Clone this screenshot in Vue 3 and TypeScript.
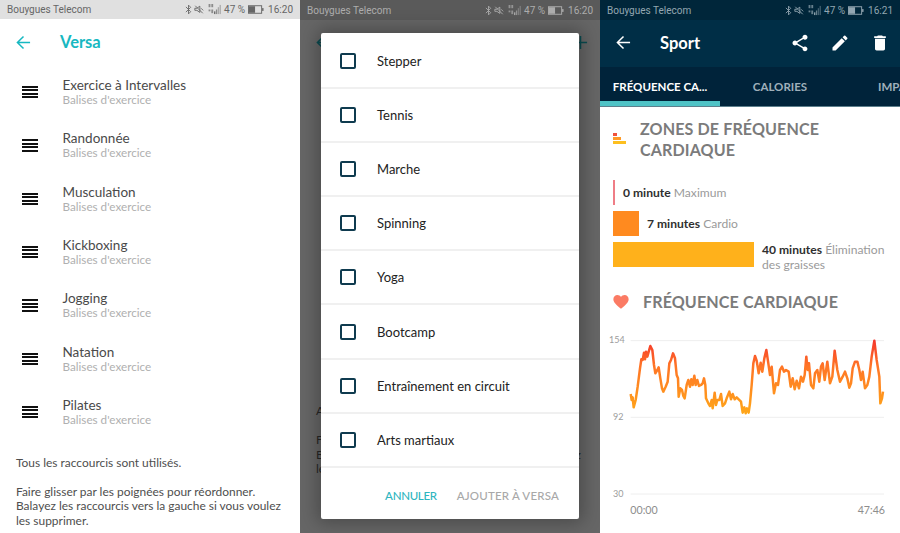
<script setup lang="ts">
const sports = ['Exercice à Intervalles', 'Randonnée', 'Musculation', 'Kickboxing', 'Jogging', 'Natation', 'Pilates']
const options = ['Stepper', 'Tennis', 'Marche', 'Spinning', 'Yoga', 'Bootcamp', 'Entraînement en circuit', 'Arts martiaux']
const trace = '92,222 95,240 98,232 101,262 107,240 113,200 120,145 124,118 128,120 132,98 135,118 138,95 142,110 147,92 151,78 157,90 162,135 166,160 172,150 176,142 181,175 186,205 190,215 197,200 203,185 208,130 213,120 219,100 225,115 230,165 234,175 236,230 241,205 246,210 250,228 254,235 260,195 265,180 270,200 274,178 278,195 283,167 287,195 292,180 297,198 303,195 308,190 312,175 316,195 318,235 325,250 330,258 335,240 338,265 344,218 348,255 352,240 358,240 363,222 368,258 375,250 380,235 388,215 393,238 398,222 404,238 410,232 416,238 423,245 428,278 433,262 437,280 441,265 446,278 450,250 455,195 460,130 465,108 470,122 476,160 482,128 487,155 493,115 499,90 505,130 510,165 515,140 522,220 528,190 534,195 540,150 546,140 552,155 558,150 566,155 572,200 578,175 584,208 590,182 597,205 603,170 609,185 614,165 619,110 623,150 627,130 633,195 640,205 645,160 652,150 658,185 663,140 668,130 674,180 682,125 690,190 697,170 704,92 712,150 720,185 728,170 735,155 742,175 748,203 753,190 758,145 765,125 772,125 778,150 783,180 788,155 795,205 802,195 808,170 815,110 823,62 830,120 838,170 841,250 846,235 849,215'
const gridLines: { y: number; label: string; x: number }[] = [
  { y: 62, label: '154', x: 27 },
  { y: 292, label: '92', x: 39 },
  { y: 522, label: '30', x: 39 },
]
</script>

<template>
  <div class="shots">
    <svg class="defs" width="0" height="0" aria-hidden="true">
      <symbol id="st-bt" viewBox="0 0 8 12">
        <path d="M1 3l5.500 5.500L4 11V1l2.500 2.500L1 9" fill="none" stroke="currentColor" stroke-width="1" />
      </symbol>
      <symbol id="st-mute" viewBox="0 0 12 12">
        <path d="M1 4.500h2.500L7 2v7.500L3.500 7H1zM1.500 1.500l9 9M8.500 4.500l2.500 2.500" fill="none" stroke="currentColor" stroke-width="1.100" />
      </symbol>
      <symbol id="st-sig" viewBox="0 0 14 12">
        <rect x="0" y="0" width="2" height="3.500" fill="currentColor" opacity=".7" />
        <rect x="3" y="0" width="2" height="3.500" fill="currentColor" opacity=".7" />
        <rect x="0" y="6" width="2" height="2" fill="currentColor" opacity=".7" />
        <rect x="3" y="6" width="2" height="4" fill="currentColor" opacity=".7" />
        <rect x="6" y="8" width="1.400" height="3" fill="currentColor" />
        <rect x="8" y="6" width="1.400" height="5" fill="currentColor" opacity=".7" />
        <rect x="10" y="3.500" width="1.400" height="7.500" fill="currentColor" opacity=".45" />
        <rect x="12" y="1" width="1.400" height="10" fill="currentColor" opacity=".45" />
      </symbol>
      <symbol id="st-bat" viewBox="0 0 17 9">
        <rect x=".5" y=".5" width="14" height="8" fill="none" stroke="currentColor" />
        <rect x="1" y="1" width="6.500" height="7" fill="currentColor" />
        <rect x="15" y="3" width="1.500" height="3" fill="currentColor" />
      </symbol>
    </svg>

    <section class="panel light">
      <div class="status">
        <span>Bouygues Telecom</span>
        <div class="status-right">
          <svg class="i-bt"><use href="#st-bt" /></svg>
          <svg class="i-mute"><use href="#st-mute" /></svg>
          <svg class="i-sig"><use href="#st-sig" /></svg>
          <span>47 %</span>
          <svg class="i-bat"><use href="#st-bat" /></svg>
          <span>16:20</span>
        </div>
      </div>
      <header class="bar">
        <svg class="back" viewBox="0 0 16 16"><path d="M15 8H2M8 1.500L1.500 8 8 14.500" fill="none" stroke="currentColor" stroke-width="1.600" /></svg>
        <h1>Versa</h1>
      </header>
      <ul class="sports">
        <li v-for="s in sports" :key="s">
          <span class="handle"><i></i><i></i><i></i><i></i></span>
          <div>
            <div class="sport-name">{{ s }}</div>
            <div class="sport-sub">Balises d'exercice</div>
          </div>
        </li>
      </ul>
      <div class="note">
        <p>Tous les raccourcis sont utilisés.</p>
        <p>Faire glisser par les poignées pour réordonner. Balayez les raccourcis vers la gauche si vous voulez les supprimer.</p>
      </div>
    </section>

    <section class="panel dim">
      <div class="status">
        <span>Bouygues Telecom</span>
        <div class="status-right">
          <svg class="i-bt"><use href="#st-bt" /></svg>
          <svg class="i-mute"><use href="#st-mute" /></svg>
          <svg class="i-sig"><use href="#st-sig" /></svg>
          <span>47 %</span>
          <svg class="i-bat"><use href="#st-bat" /></svg>
          <span>16:20</span>
        </div>
      </div>
      <div class="dim-peek">
        <p>Ajouter</p>
        <p>Faire<br />Balayez les raccourcis vers la gauche si vous voulez<br />les</p>
      </div>
      <svg class="peek-arrow" viewBox="0 0 16 16"><path d="M15 8H2M8 1.500L1.500 8 8 14.500" fill="none" stroke="currentColor" stroke-width="1.600" /></svg>
      <svg class="peek-plus" viewBox="0 0 16 16"><path d="M1 8h14M8 1v14" fill="none" stroke="currentColor" stroke-width="1.600" /></svg>
      <div class="modal">
        <div v-for="o in options" :key="o" class="opt">
          <span class="check"></span>
          <span>{{ o }}</span>
        </div>
        <div class="actions">
          <span class="cancel">ANNULER</span>
          <span class="add">AJOUTER À VERSA</span>
        </div>
      </div>
    </section>

    <section class="panel sport">
      <div class="status">
        <span>Bouygues Telecom</span>
        <div class="status-right">
          <svg class="i-bt"><use href="#st-bt" /></svg>
          <svg class="i-mute"><use href="#st-mute" /></svg>
          <svg class="i-sig"><use href="#st-sig" /></svg>
          <span>47 %</span>
          <svg class="i-bat"><use href="#st-bat" /></svg>
          <span>16:21</span>
        </div>
      </div>
      <header class="bar sport-bar">
        <svg class="back" viewBox="0 0 16 16"><path d="M15 8H2M8 1.500L1.500 8 8 14.500" fill="none" stroke="currentColor" stroke-width="1.600" /></svg>
        <h1>Sport</h1>
        <div class="tools">
          <svg viewBox="0 0 24 24"><path fill="currentColor" d="M18 16.080c-.76 0-1.440.3-1.960.77L8.910 12.700c.05-.23.090-.46.090-.7s-.04-.47-.09-.7l7.050-4.110c.54.5 1.250.81 2.040.81 1.660 0 3-1.340 3-3s-1.340-3-3-3-3 1.340-3 3c0 .24.040.47.090.7L8.040 9.810C7.500 9.310 6.790 9 6 9c-1.660 0-3 1.340-3 3s1.340 3 3 3c.79 0 1.500-.31 2.040-.81l7.120 4.160c-.05.21-.08.43-.08.65 0 1.610 1.310 2.920 2.920 2.920s2.920-1.310 2.920-2.920-1.310-2.920-2.920-2.920z" /></svg>
          <svg viewBox="0 0 24 24"><path fill="currentColor" d="M3 17.250V21h3.750L17.810 9.940l-3.750-3.750L3 17.250zM20.710 7.040a1 1 0 0 0 0-1.410l-2.340-2.340a1 1 0 0 0-1.410 0l-1.830 1.830 3.750 3.750 1.830-1.830z" /></svg>
          <svg viewBox="0 0 24 24"><path fill="currentColor" d="M6 19c0 1.100.9 2 2 2h8c1.100 0 2-.9 2-2V7H6v12zM19 4h-3.500l-1-1h-5l-1 1H5v2h14V4z" /></svg>
        </div>
      </header>
      <nav class="tabs">
        <span class="tab active">FRÉQUENCE CA...</span>
        <span class="tab">CALORIES</span>
        <span class="tab cut">IMPACT</span>
      </nav>
      <div class="sport-body">
        <div class="section-head zones-head">
          <svg class="zones-ico" viewBox="0 0 13 11">
            <rect x="0" y="0" width="4" height="3" fill="#f0523c" />
            <rect x="0" y="4" width="8" height="3" fill="#ff9a26" />
            <rect x="0" y="8" width="13" height="3" fill="#fdbf1f" />
          </svg>
          <h2>ZONES DE FRÉQUENCE CARDIAQUE</h2>
        </div>
        <div class="zone zone-max">
          <span class="z-bar z0"></span>
          <span class="z-text"><b>0 minute</b> Maximum</span>
        </div>
        <div class="zone zone-cardio">
          <span class="z-bar z1"></span>
          <span class="z-text"><b>7 minutes</b> Cardio</span>
        </div>
        <div class="zone zone-fat">
          <span class="z-bar z2"></span>
          <span class="z-text"><b>40 minutes</b> Élimination des graisses</span>
        </div>
        <div class="section-head heart-head">
          <svg class="heart" viewBox="0 0 24 22"><path fill="#fb7b64" d="M12 21.500C5 15.500 0 11.500 0 6.500 0 2.800 2.800 0 6.400 0 8.600 0 10.800 1.100 12 3c1.200-1.900 3.400-3 5.600-3C21.200 0 24 2.800 24 6.500c0 5-5 9-12 15z" /></svg>
          <h2>FRÉQUENCE CARDIAQUE</h2>
        </div>
        <div class="chart">
          <svg viewBox="0 0 900 639" width="300" height="213">
            <defs>
              <linearGradient id="hr" gradientUnits="userSpaceOnUse" x1="0" y1="60" x2="0" y2="285">
                <stop offset="0" stop-color="#f4352b" />
                <stop offset=".35" stop-color="#ff7526" />
                <stop offset="1" stop-color="#ffa818" />
              </linearGradient>
            </defs>
            <g v-for="g in gridLines" :key="g.label">
              <line x1="92" x2="852" :y1="g.y" :y2="g.y" stroke="#eeeeee" stroke-width="3" />
              <text :x="g.x" :y="g.y + 8" class="axis">{{ g.label }}</text>
            </g>
            <polyline :points="trace" fill="none" stroke="url(#hr)" stroke-width="7.500" stroke-linejoin="round" />
            <text x="91" y="582" class="time">00:00</text>
            <text x="773" y="582" class="time">47:46</text>
          </svg>
        </div>
      </div>
    </section>
  </div>
</template>

<style>
html, body { margin: 0; background: #fff; }
</style>

<style scoped>
.shots {
  display: flex;
  width: 900px;
  height: 533px;
  overflow: hidden;
  font-family: Lato, "Open Sans", sans-serif;
}
.defs { position: absolute; }
.panel {
  position: relative;
  width: 300px;
  height: 533px;
  overflow: hidden;
  background: #fff;
  flex: none;
}
.status {
  display: flex;
  justify-content: space-between;
  align-items: center;
  height: 19px;
  padding: 0 7px;
  font-family: Roboto, sans-serif;
  font-size: 10px;
  color: #666;
  background: #e0e0e0;
}
.dim .status, .sport .status { height: 20px; }
.status-right { display: flex; align-items: center; gap: 2px; }
.i-bt { width: 7px; height: 11px; }
.i-mute { width: 10px; height: 11px; margin-right: 2px; }
.i-sig { width: 14px; height: 11px; }
.i-bat { width: 16px; height: 9px; margin: 0 2px 0 1px; }

.bar {
  display: flex;
  align-items: center;
  height: 47px;
  padding-left: 16px;
  padding-bottom: 1px;
  box-sizing: border-box;
  color: #17b8c1;
}
.back { width: 15px; height: 15px; flex: none; }
.bar h1 {
  margin: 0 0 0 29px;
  font-size: 16.500px;
  font-weight: 700;
  line-height: 20px;
}

.sports { list-style: none; margin: 0; padding: 0; }
.sports li {
  display: flex;
  align-items: center;
  height: 53.330px;
  padding-left: 22px;
  box-sizing: border-box;
}
.handle {
  display: flex;
  flex-direction: column;
  gap: 1.400px;
  width: 16px;
  margin-right: 24.500px;
  margin-top: -1px;
}
.handle i { display: block; height: 2px; background: #111; }
.sport-name { font-size: 13.500px; line-height: 15px; color: #4a4a4a; }
.sport-sub { font-size: 11.700px; line-height: 14px; margin-top: -1px; padding-bottom: 1px; color: #b0b0b0; }
.note {
  margin-top: 16.500px;
  padding: 0 16px;
  font-size: 11.950px;
  line-height: 14.600px;
  color: #4e4e4e;
}
.note p { margin: 0 0 14.500px; }

.dim { background: #666; }
.dim .status { background: #5a5a5a; color: #adadad; }
.dim-peek {
  position: absolute;
  top: 404px;
  left: 16px;
  width: 270px;
  font-size: 11.950px;
  line-height: 14.600px;
  color: #262626;
}
.dim-peek p { margin: 0 0 14.500px; }
.peek-arrow, .peek-plus {
  position: absolute;
  top: 35px;
  width: 15px;
  height: 15px;
  color: #0a4b50;
}
.peek-arrow { left: 16px; }
.peek-plus { left: 273px; }
.modal {
  position: absolute;
  left: 21px;
  top: 33px;
  width: 258px;
  height: 486px;
  padding-top: 2px;
  box-sizing: border-box;
  background: #fff;
  border-radius: 2px;
  box-shadow: 0 0 18px 4px rgba(0, 0, 0, .28);
  display: flex;
  flex-direction: column;
  font-size: 13px;
  color: #222;
}
.opt {
  display: flex;
  align-items: center;
  height: 54.100px;
  flex: none;
  padding-left: 19px;
  box-sizing: border-box;
  border-bottom: 2px solid #f0f0f0;
}
.check {
  width: 12px;
  height: 12px;
  border: 2px solid #0f3b4f;
  border-radius: 2px;
  margin-right: 21px;
  flex: none;
}
.actions {
  flex: 1;
  display: flex;
  justify-content: flex-end;
  align-items: center;
  gap: 20px;
  padding: 5px 20px 0 0;
  font-size: 11.500px;
  font-weight: 500;
  letter-spacing: .2px;
}
.cancel { color: #2fb6bf; letter-spacing: -.3px; }
.add { color: #a8a8a8; }

.sport .status { background: #00263a; color: #93a6b1; }
.sport-bar { background: #002e46; color: #fff; padding-bottom: 2px; }
.tools {
  margin-left: auto;
  display: flex;
  gap: 20px;
  padding-right: 10px;
}
.tools svg { width: 20px; height: 20px; }
.tabs {
  display: flex;
  height: 40px;
  background: #00233a;
  border-bottom: 1px solid #5d7f8c;
  box-sizing: border-box;
  font-size: 11.500px;
  font-weight: 700;
  color: #9fb0ba;
  overflow: hidden;
}
.tab {
  position: relative;
  display: flex;
  align-items: center;
  justify-content: center;
  width: 120px;
  flex: none;
  box-sizing: border-box;
  white-space: nowrap;
}
.tab.active { color: #fff; }
.tab.active::after {
  content: '';
  position: absolute;
  left: 0;
  right: 0;
  bottom: 0;
  height: 5px;
  background: #4fc3c6;
}
.tab.cut { justify-content: flex-start; padding-left: 38px; }

.sport-body { padding: 0 13px; }
.section-head { display: flex; }
.section-head h2 {
  margin: 0;
  font-size: 16.100px;
  line-height: 21px;
  font-weight: 700;
  color: #7b7b7b;
  letter-spacing: .1px;
}
.zones-head { padding-top: 11px; width: 240px; }
.zones-ico { width: 13px; height: 11px; margin: 15px 14px 0 0; flex: none; }
.zone { display: flex; align-items: center; font-size: 12.100px; color: #9a9a9a; }
.z-text b { color: #2f2f2f; font-weight: 700; }
.z-bar { flex: none; display: block; }
.zone-max { margin-top: 20px; }
.zone-max .z-text, .zone-cardio .z-text { margin-top: -1px; }
.z0 { width: 1.500px; height: 25px; background: #ef7d86; margin-right: 8.500px; }
.zone-cardio { margin-top: 6px; }
.z1 { width: 26px; height: 25px; background: #ff8a1f; margin-right: 8px; }
.zone-fat { margin-top: 6px; align-items: flex-start; }
.z2 { width: 141px; height: 25px; background: #ffb11b; margin-right: 8px; }
.zone-fat .z-text { line-height: 15px; width: 130px; }
.heart-head { margin-top: 19px; align-items: center; }
.heart { width: 16px; height: 14px; margin-right: 14px; flex: none; }
.chart { margin: 8px -13px 0; height: 213px; }
.axis { font-size: 27px; fill: #9c9c9c; font-family: Lato, sans-serif; }
.time { font-size: 32px; fill: #8d8d8d; font-family: Lato, sans-serif; }
</style>
